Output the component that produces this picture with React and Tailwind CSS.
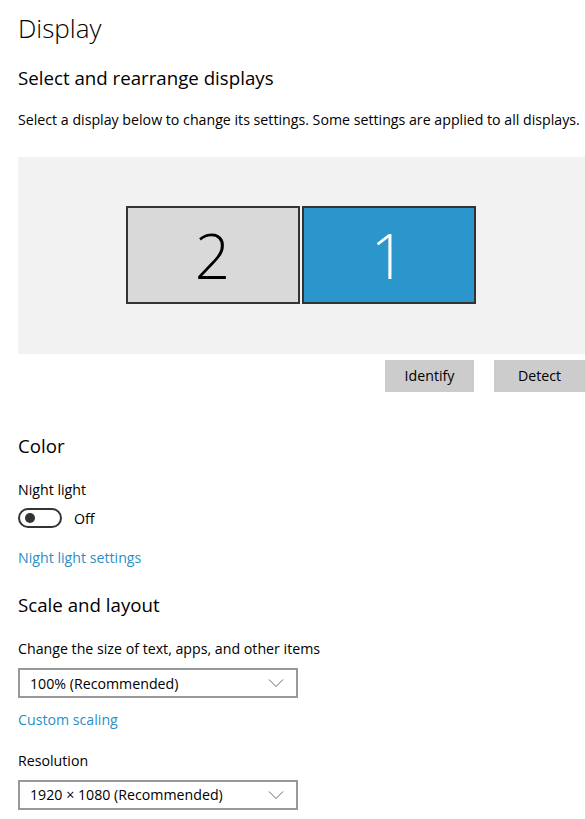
import React from "react";

// ─── Small pieces ────────────────────────────────────────────────────────────
const Chevron = () => (
  <svg width="16" height="10" viewBox="0 0 16 10" fill="none" stroke="#666" strokeWidth="1">
    <path d="M1 1.5 L8 8.5 L15 1.5" />
  </svg>
);

const Dropdown = ({ value }) => (
  <div className="w-[280px] h-[30px] border-2 border-[#999999] flex items-center justify-between pl-[10px] pr-[12px] text-[14.2px] text-black">
    <span>{value}</span>
    <Chevron />
  </div>
);

const Monitor = ({ n, active }) => (
  <div
    className={
      active
        ? "w-[174px] h-[98px] border-2 border-[#333333] bg-[#2b96cc] text-white flex items-center justify-center"
        : "w-[174px] h-[98px] border-2 border-[#333333] bg-[#d9d9d9] text-black flex items-center justify-center"
    }
  >
    <span className="text-[62px] font-light leading-none">{n}</span>
  </div>
);

const Link = ({ children }) => (
  <div className="text-[14.2px] leading-none text-[#2b8fc6]">{children}</div>
);

export default function App() {
  return (
    <div className="bg-white w-[585px] h-[819px] overflow-hidden pl-[18px] font-['Open_Sans',sans-serif] text-black">
      <h1 className="text-[26px] font-light leading-none pt-[15px]">Display</h1>

      <h2 className="text-[18.7px] leading-none mt-[28px]">Select and rearrange displays</h2>
      <p className="text-[14.2px] leading-none mt-[25px] whitespace-nowrap">
        Select a display below to change its settings. Some settings are applied to all displays.
      </p>

      <div className="mt-[30px] h-[197px] bg-[#f2f2f2] flex items-center justify-center gap-[2px] pr-[2px]">
        <Monitor n="2" />
        <Monitor n="1" active />
      </div>

      <div className="flex justify-end gap-[20px] mt-[6px]">
        <button className="w-[89px] h-[32px] bg-[#cccccc] text-[14.2px]">Identify</button>
        <button className="w-[91px] h-[32px] bg-[#cccccc] text-[14.2px]">Detect</button>
      </div>

      <h2 className="text-[18.7px] leading-none mt-[45px]">Color</h2>
      <div className="text-[14.2px] leading-none mt-[27px]">Night light</div>
      <div className="flex items-center gap-[12px] mt-[11px]">
        <div className="w-[44px] h-[20px] rounded-full border-2 border-[#333333] flex items-center pl-[5px]">
          <div className="w-[10px] h-[10px] rounded-full bg-[#333333]" />
        </div>
        <span className="text-[14.2px]">Off</span>
      </div>
      <div className="mt-[22px]">
        <Link>Night light settings</Link>
      </div>

      <h2 className="text-[18.7px] leading-none mt-[31px]">Scale and layout</h2>
      <div className="text-[14.2px] leading-none mt-[27px]">Change the size of text, apps, and other items</div>
      <div className="mt-[12px]">
        <Dropdown value="100% (Recommended)" />
      </div>
      <div className="mt-[15px]">
        <Link>Custom scaling</Link>
      </div>
      <div className="text-[14.2px] leading-none mt-[27px]">Resolution</div>
      <div className="mt-[11px]">
        <Dropdown value="1920 × 1080 (Recommended)" />
      </div>
    </div>
  );
}
